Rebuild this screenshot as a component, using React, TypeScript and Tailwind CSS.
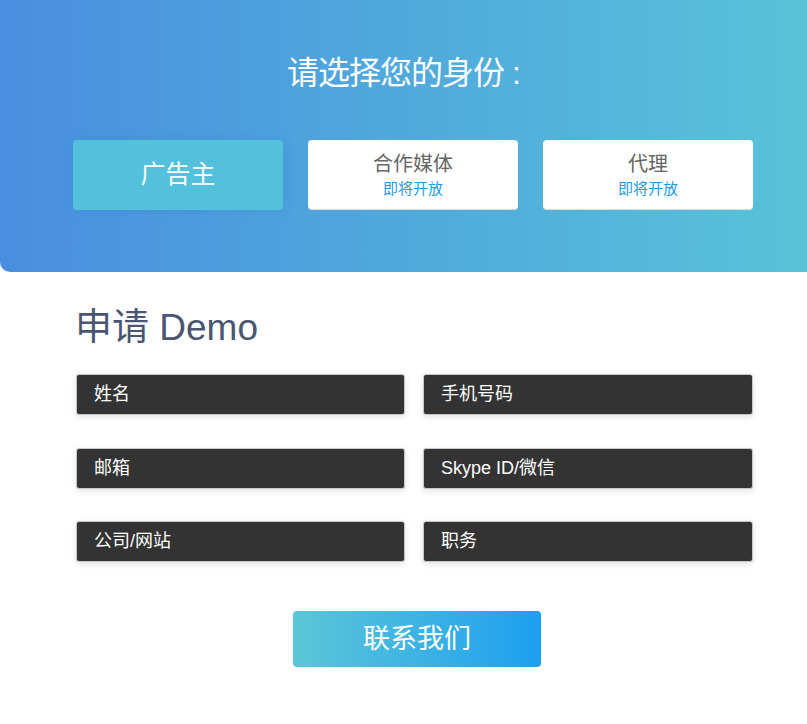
import React from "react";

const font = {
  fontFamily: '"Liberation Sans", "Noto Sans CJK SC", sans-serif',
};

const fields = [
  ["姓名", "手机号码"],
  ["邮箱", "Skype ID/微信"],
  ["公司/网站", "职务"],
];

export default function App() {
  return (
    <div className="w-[807px] h-[724px] bg-white overflow-hidden" style={font}>
      <div className="h-[272px] rounded-bl-[10px] bg-gradient-to-r from-[#4a8edf] to-[#58c3d8] flex flex-col">
        <h1 className="mt-[52px] h-[42px] text-[32px] leading-[42px] text-white tracking-[-1px] text-center">
          请选择您的身份 :
        </h1>
        <div className="mt-[46px] flex gap-[25px] pl-[73px]">
          <button className="w-[210px] h-[70px] rounded-[4px] bg-[#53c0dc] shadow-[0_0_8px_rgba(60,140,210,0.6)] text-white text-[25px] flex items-center justify-center">
            广告主
          </button>
          {["合作媒体", "代理"].map((t) => (
            <div
              key={t}
              className="w-[210px] h-[70px] rounded-[4px] bg-white border-b border-[#dcdcdc] flex flex-col items-center pt-[10px]"
            >
              <span className="text-[20px] leading-[28px] text-[#666]">{t}</span>
              <span className="text-[15px] leading-[20px] text-[#1c9ae6] mt-[1px]">即将开放</span>
            </div>
          ))}
        </div>
      </div>

      <div className="pl-[76px]">
        <h2 className="mt-[34px] -ml-[1px] text-[37px] leading-[44px] text-[#4a5570]">申请 Demo</h2>
        <div className="mt-[24px] grid grid-cols-[329px_330px] gap-x-[18px] gap-y-[32.5px]">
          {fields.flat().map((p) => (
            <div
              key={p}
              className="h-[41px] rounded-[3px] bg-[#333] border border-[#c8c8c8] shadow-[0_2px_6px_rgba(0,0,0,0.12)] flex items-center pl-[17px] text-white text-[18px]"
            >
              {p}
            </div>
          ))}
        </div>
      </div>

      <div className="flex mt-[49px] pl-[293px]">
        <button className="w-[248px] h-[56px] rounded-[4px] bg-gradient-to-r from-[#5ac6d6] to-[#1a9ff0] text-white text-[27px]">
          联系我们
        </button>
      </div>
    </div>
  );
}
